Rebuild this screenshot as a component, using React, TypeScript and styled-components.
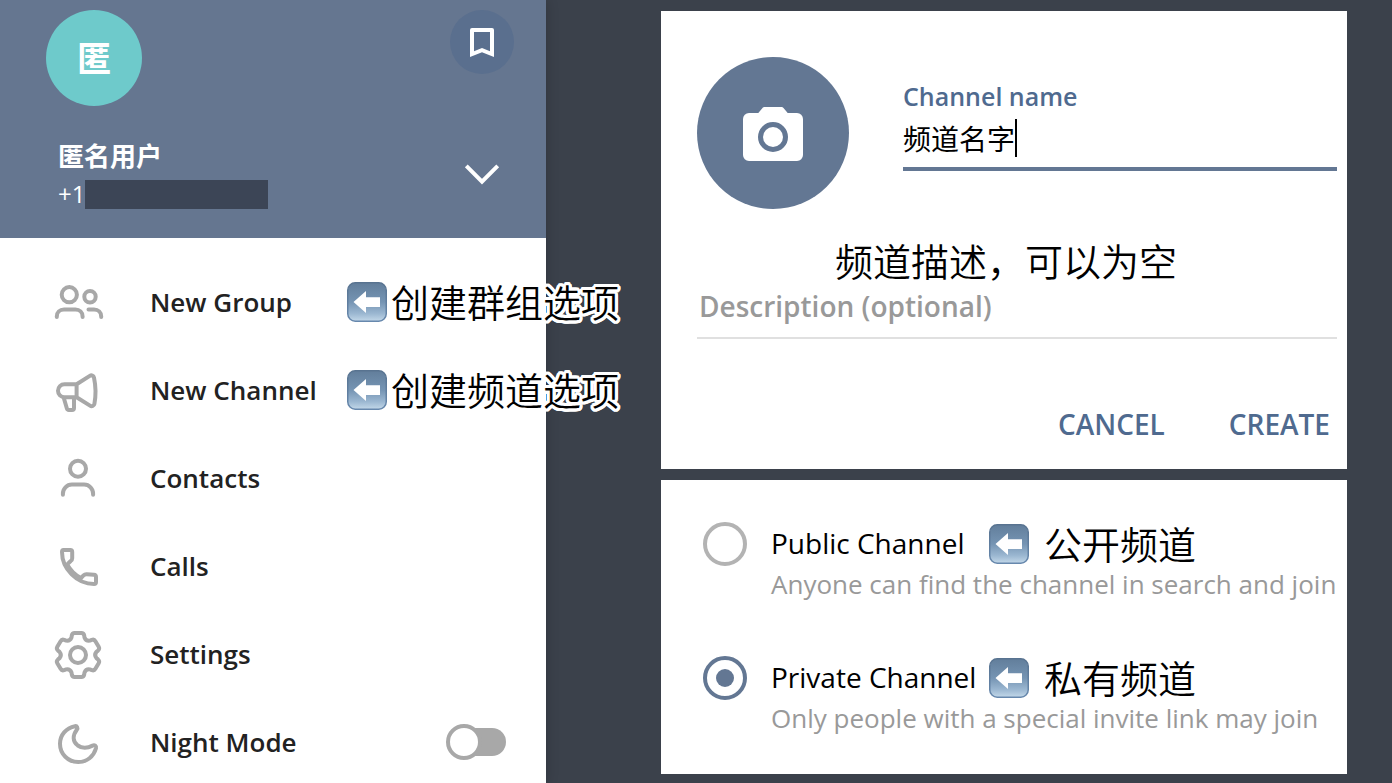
import React, { useState } from "react";
import styled, { createGlobalStyle } from "styled-components";

const latin = `"Open Sans", "Noto Sans CJK SC", sans-serif`;
const cjk = `"Noto Sans CJK SC", "Open Sans", sans-serif`;

const color = {
  backdrop: "#3b414b",
  header: "#657690",
  headerButton: "#5a6f8e",
  accent: "#637793",
  link: "#4f6a8f",
  muted: "#999999",
  icon: "#a8a8a8",
};

/* A ring of hard shadows draws an even, round white outline round the notes. */
const outline = Array.from({ length: 24 }, (_, i) => {
  const a = (i * Math.PI) / 12;
  return `${(3 * Math.cos(a)).toFixed(1)}px ${(3 * Math.sin(a)).toFixed(1)}px 0 #fff`;
}).join(", ");

const GlobalStyle = createGlobalStyle`
  *, *::before, *::after { box-sizing: border-box; }
  body { margin: 0; background: ${color.backdrop}; font-family: ${latin}; }
  button, input { font: inherit; margin: 0; }
  button { border: 0; padding: 0; background: none; cursor: pointer; }
`;

const Page = styled.div`
  display: flex;
  height: 100vh;
  overflow: hidden;
  background: ${color.backdrop};
`;

const Sidebar = styled.aside`
  position: relative;
  z-index: 1;
  flex: 0 0 546px;
  min-width: 0;
  background: #fff;
  box-shadow: 0 0 12px rgba(0, 0, 0, 0.2);
`;

const Header = styled.header`
  padding: 10px 32px 24px 46px;
  background: ${color.header};
  color: #fff;
`;

const HeaderRow = styled.div<{ $align: string }>`
  display: flex;
  justify-content: space-between;
  align-items: ${(p) => p.$align};
`;

const Avatar = styled.div`
  display: flex;
  align-items: center;
  justify-content: center;
  width: 96px;
  height: 96px;
  margin-bottom: 32px;
  padding-bottom: 2px;
  border-radius: 50%;
  background: #6ecacb;
  font: 700 34px/48px ${cjk};
`;

const RoundButton = styled.button<{ $filled?: boolean }>`
  display: flex;
  align-items: center;
  justify-content: center;
  width: 64px;
  height: 64px;
  border-radius: 50%;
  background: ${(p) => (p.$filled ? color.headerButton : "transparent")};
`;

const Account = styled.div`
  padding-left: 12px;
`;

const AccountName = styled.div`
  font: 700 26px/34px ${cjk};
`;

const Phone = styled.div`
  display: flex;
  align-items: center;
  padding-top: 2px;
  font-size: 24px;
  line-height: 40px;
`;

const Redaction = styled.span`
  width: 183px;
  height: 29px;
  background: #3c4556;
`;

const Menu = styled.nav`
  padding-top: 20px;
`;

const MenuRow = styled.div`
  display: flex;
  align-items: center;
  height: 88px;
  padding-right: 40px;
`;

const MenuButton = styled.button`
  display: flex;
  align-items: center;
  gap: 44px;
  flex: 0 0 347px;
  height: 100%;
  padding-left: 50px;
  color: #222;
  font-size: 26px;
  font-weight: 600;
  line-height: 36px;
  text-align: left;
  white-space: nowrap;
`;

const SwitchRow = styled(MenuRow).attrs({ as: "label" })`
  justify-content: space-between;
  cursor: pointer;
`;

const SwitchLabel = styled(MenuButton).attrs({ as: "span" })``;

const Switch = styled.input`
  position: relative;
  width: 60px;
  height: 36px;
  appearance: none;
  cursor: pointer;

  &::before {
    content: "";
    position: absolute;
    inset: 4px 0 4px 8px;
    border-radius: 14px;
    background: ${color.icon};
  }

  &::after {
    content: "";
    position: absolute;
    top: 0;
    left: 0;
    width: 36px;
    height: 36px;
    border: 4px solid ${color.icon};
    border-radius: 50%;
    background: #fff;
  }

  &:checked::after {
    left: 24px;
  }
`;

const Callout = styled.span<{ $gap: number }>`
  display: flex;
  align-items: center;
  gap: ${(p) => p.$gap}px;
`;

const NoteText = styled.span`
  display: block;
  padding-bottom: 2px;
  font: 350 38px/42px ${cjk};
  color: #000;
  white-space: nowrap;
  text-shadow: ${outline};
`;

const Main = styled.main`
  display: flex;
  flex: 1;
  flex-direction: column;
  gap: 11px;
  min-width: 0;
  padding: 11px 45px 9px 115px;
`;

const FormCard = styled.form`
  padding: 46px 10px 24px 36px;
  background: #fff;
`;

const NameRow = styled.div`
  display: flex;
  gap: 54px;
`;

const PhotoButton = styled.button`
  display: flex;
  align-items: center;
  justify-content: center;
  flex: none;
  width: 152px;
  height: 152px;
  border-radius: 50%;
  background: ${color.accent};
`;

const NameField = styled.label`
  flex: 1;
  min-width: 0;
  padding-top: 20px;
`;

const FieldLabel = styled.span`
  display: block;
  padding-bottom: 2px;
  color: ${color.link};
  font-size: 25px;
  font-weight: 600;
  line-height: 38px;
`;

const FieldLine = styled.span`
  display: flex;
  align-items: center;
  height: 54px;
  padding-bottom: 8px;
  border-bottom: 4px solid ${color.accent};
`;

const NameInput = styled.input`
  width: 4em;
  padding: 0;
  border: 0;
  outline: 0;
  background: none;
  caret-color: transparent;
  color: #000;
  font: 400 28px/40px ${cjk};
`;

const Caret = styled.span`
  width: 2px;
  height: 38px;
  background: #000;
`;

const DescriptionNote = styled.div`
  padding: 30px 0 8px 138px;
`;

const DescriptionInput = styled.input`
  display: block;
  width: 100%;
  height: 48px;
  padding: 0 2px 16px;
  border: 0;
  border-bottom: 2px solid #e0e0e0;
  outline: 0;
  font-size: 28px;
  font-weight: 600;
  line-height: 30px;

  &::placeholder {
    color: ${color.muted};
    opacity: 1;
  }
`;

const Actions = styled.div`
  display: flex;
  justify-content: flex-end;
  gap: 64px;
  padding: 65px 7px 1px 0;
`;

const TextButton = styled.button`
  color: ${color.link};
  font-size: 28px;
  font-weight: 600;
  line-height: 40px;
`;

const OptionsCard = styled.section`
  display: flex;
  flex-direction: column;
  gap: 54px;
  padding: 42px 10px 38px 42px;
  background: #fff;
`;

const Option = styled.label`
  display: grid;
  grid-template-columns: 44px minmax(0, 1fr);
  column-gap: 24px;
  cursor: pointer;
`;

const Radio = styled.input`
  display: flex;
  align-items: center;
  justify-content: center;
  width: 44px;
  height: 44px;
  border: 4px solid #b3b3b3;
  border-radius: 50%;
  appearance: none;
  cursor: pointer;

  &:checked {
    border-color: ${color.accent};
  }

  &:checked::before {
    content: "";
    width: 18px;
    height: 18px;
    border-radius: 50%;
    background: ${color.accent};
  }
`;

const OptionHeading = styled.span`
  display: flex;
  align-items: center;
  height: 44px;
`;

const OptionTitle = styled.span`
  flex: 0 0 218px;
  padding-bottom: 2px;
  color: #000;
  font-size: 28px;
  line-height: 42px;
  white-space: nowrap;
`;

const OptionHint = styled.span`
  grid-column: 2;
  color: ${color.muted};
  font-size: 26px;
  line-height: 36px;
  white-space: nowrap;
`;

const gearPath =
  [0, 1, 2, 3, 4, 5]
    .map((i) => {
      const a = (i * Math.PI) / 3;
      const at = (x: number, y: number) =>
        `${(28 + x * Math.cos(a) - y * Math.sin(a)).toFixed(2)} ${(29 + x * Math.sin(a) + y * Math.cos(a)).toFixed(2)}`;
      return [
        `${i ? "" : "M"}${at(-6.5, -17.5)}`,
        `L${at(-6.2, -19.5)}`,
        `Q${at(-5.7, -22)} ${at(-3.3, -22)}`,
        `L${at(3.3, -22)}`,
        `Q${at(5.7, -22)} ${at(6.2, -19.5)}`,
        `L${at(6.5, -17.5)}`,
        `Q${at(7.9, -13.8)}`,
      ].join(" ");
    })
    .join(" ") + " 21.5 11.5Z";

const MenuIcon = ({ children }: { children: React.ReactNode }) => (
  <svg
    width="56"
    height="56"
    viewBox="0 0 56 56"
    fill="none"
    stroke={color.icon}
    strokeWidth="4"
    strokeLinecap="round"
    strokeLinejoin="round"
    aria-hidden="true"
  >
    {children}
  </svg>
);

const GroupIcon = () => (
  <MenuIcon>
    <circle cx="19.3" cy="20.7" r="7.6" />
    <circle cx="40" cy="22.7" r="5.7" />
    <path d="M6.8 43v-.5c0-4 3-7 7.2-7h11.4c4.2 0 7.2 3 7.2 7v.5M38.5 35.4h5.5c4.2 0 7.2 3 7.2 7v.6" />
  </MenuIcon>
);

const ChannelIcon = () => (
  <MenuIcon>
    <path d="M26.6 22.3H14.5a6.5 6.5 0 0 0 0 13h12.1zL39.8 13.9c1.7-1.1 3.8-.3 4.2 1.7 1.7 8 1.9 18.3.4 26.2-.4 2.1-2.6 3-4.4 1.8L26.6 35.3M13.8 36l3 10.3c.3 1.1 1 1.7 2 1.7h3.2c1.2 0 2-.9 2-2V35.3" />
  </MenuIcon>
);

const ContactIcon = () => (
  <MenuIcon>
    <circle cx="28" cy="18.7" r="8" />
    <path d="M12.9 44.8v-1c0-5 3.8-9.2 9-9.2h12.2c5.2 0 9 4.2 9 9.2v1" />
  </MenuIcon>
);

const CallIcon = () => (
  <MenuIcon>
    <path d="M13.5 12h6.8c1.2 0 1.9.8 1.9 1.9v6.3c0 1.2-.5 2-1.5 2.8l-3.5 3.4C20.2 32 25.5 37.2 31 40l2.5-2.6c.8-.8 2-1.3 3.2-1.2l7.2.6c1.3.1 2.1.9 2.1 2.1v5.1c0 1.2-.8 2-2 2C27 46 12 31 12 14c0-1.2.4-2 1.5-2z" />
  </MenuIcon>
);

const SettingsIcon = () => (
  <MenuIcon>
    <circle cx="28" cy="29" r="8" />
    <path d={gearPath} />
  </MenuIcon>
);

const MoonIcon = () => (
  <MenuIcon>
    <path d="M25 12.2C16 14 10 21 10 29.7 10 40 18 48 28.3 48 37 48 43.6 42.5 46 34.2c.5-2.2-1.4-3.6-3.4-2.6-4.6 2.4-10.6 2.9-14.8-.1-5.3-4-5.3-10-1-15.7 1.4-2 .2-4-1.8-3.6z" />
  </MenuIcon>
);

const BookmarkIcon = () => (
  <svg width="32" height="32" viewBox="0 0 32 32" fill="#fff" aria-hidden="true">
    <path
      fillRule="evenodd"
      d="M6 2h20a2 2 0 0 1 2 2v27l-12-4.8L4 31V4a2 2 0 0 1 2-2zm2 4v19.3l8-3.4 8 3.4V6z"
    />
  </svg>
);

const ChevronIcon = () => (
  <svg width="40" height="24" viewBox="0 0 40 24" fill="none" stroke="#fff" strokeWidth="4" aria-hidden="true">
    <path d="M4.3 1.8 20 17.6 35.7 1.8" />
  </svg>
);

const CameraIcon = () => (
  <svg width="60" height="56" viewBox="0 -2 60 56" fill="#fff" aria-hidden="true">
    <path
      fillRule="evenodd"
      d="M21.5 0h17c.9 0 1.5.3 2 .9L44.7 6H54a6 6 0 0 1 6 6v36a6 6 0 0 1-6 6H6a6 6 0 0 1-6-6V12a6 6 0 0 1 6-6h9.3l4.200-5.100c.5-.6 1.100-.9 2-.9zM30 15a15 15 0 1 0 0 30 15 15 0 0 0 0-30z"
    />
    <circle cx="30" cy="30" r="10" />
  </svg>
);

const ArrowBadge = () => (
  <svg width="40" height="40" viewBox="0 0 40 40" aria-hidden="true">
    <defs>
      <linearGradient id="badge" x1="0" y1="0" x2="0" y2="1">
        <stop offset="0" stopColor="#627e9b" />
        <stop offset="0.5" stopColor="#7594b3" />
        <stop offset="0.8" stopColor="#9bb7d1" />
        <stop offset="1" stopColor="#c3d8e9" />
      </linearGradient>
      <linearGradient id="badgeEdge" x1="0" y1="0" x2="0" y2="1">
        <stop offset="0" stopColor="#587390" />
        <stop offset="1" stopColor="#6788ad" />
      </linearGradient>
    </defs>
    <rect x="0.75" y="0.75" width="38.5" height="38.5" rx="7.5" fill="url(#badge)" stroke="url(#badgeEdge)" strokeWidth="1.5" />
    <path fill="#fff" d="M6.5 20 19 9v6.3h14V25H19v6z" />
  </svg>
);

const Note = ({ text, gap }: { text: string; gap: number }) => (
  <Callout $gap={gap}>
    <ArrowBadge />
    <NoteText lang="zh-CN">{text}</NoteText>
  </Callout>
);

const menu = [
  { label: "New Group", Icon: GroupIcon, note: "创建群组选项" },
  { label: "New Channel", Icon: ChannelIcon, note: "创建频道选项" },
  { label: "Contacts", Icon: ContactIcon },
  { label: "Calls", Icon: CallIcon },
  { label: "Settings", Icon: SettingsIcon },
];

const channelTypes = [
  {
    value: "public",
    title: "Public Channel",
    hint: "Anyone can find the channel in search and join",
    note: "公开频道",
  },
  {
    value: "private",
    title: "Private Channel",
    hint: "Only people with a special invite link may join",
    note: "私有频道",
  },
];

export default function App() {
  const [night, setNight] = useState(false);
  const [name, setName] = useState("频道名字");
  const [type, setType] = useState("private");

  return (
    <>
      <GlobalStyle />
      <Page>
        <Sidebar>
          <Header>
            <HeaderRow $align="flex-start">
              <Avatar>匿</Avatar>
              <RoundButton $filled aria-label="Saved messages">
                <BookmarkIcon />
              </RoundButton>
            </HeaderRow>
            <HeaderRow $align="center">
              <Account>
                <AccountName>匿名用户</AccountName>
                <Phone>
                  +1
                  <Redaction />
                </Phone>
              </Account>
              <RoundButton aria-label="Show accounts">
                <ChevronIcon />
              </RoundButton>
            </HeaderRow>
          </Header>
          <Menu>
            {menu.map(({ label, Icon, note }) => (
              <MenuRow key={label}>
                <MenuButton>
                  <Icon />
                  {label}
                </MenuButton>
                {note && <Note text={note} gap={4} />}
              </MenuRow>
            ))}
            <SwitchRow>
              <SwitchLabel>
                <MoonIcon />
                Night Mode
              </SwitchLabel>
              <Switch type="checkbox" checked={night} onChange={(e) => setNight(e.target.checked)} />
            </SwitchRow>
          </Menu>
        </Sidebar>
        <Main>
          <FormCard onSubmit={(e) => e.preventDefault()}>
            <NameRow>
              <PhotoButton type="button" aria-label="Set channel photo">
                <CameraIcon />
              </PhotoButton>
              <NameField>
                <FieldLabel>Channel name</FieldLabel>
                <FieldLine>
                  <NameInput value={name} onChange={(e) => setName(e.target.value)} />
                  <Caret />
                </FieldLine>
              </NameField>
            </NameRow>
            <DescriptionNote>
              <NoteText lang="zh-CN">频道描述，可以为空</NoteText>
            </DescriptionNote>
            <DescriptionInput aria-label="Description" placeholder="Description (optional)" />
            <Actions>
              <TextButton type="button">CANCEL</TextButton>
              <TextButton type="submit">CREATE</TextButton>
            </Actions>
          </FormCard>
          <OptionsCard>
            {channelTypes.map((t) => (
              <Option key={t.value}>
                <Radio
                  type="radio"
                  name="channel-type"
                  value={t.value}
                  checked={type === t.value}
                  onChange={() => setType(t.value)}
                />
                <OptionHeading>
                  <OptionTitle>{t.title}</OptionTitle>
                  <Note text={t.note} gap={15} />
                </OptionHeading>
                <OptionHint>{t.hint}</OptionHint>
              </Option>
            ))}
          </OptionsCard>
        </Main>
      </Page>
    </>
  );
}
